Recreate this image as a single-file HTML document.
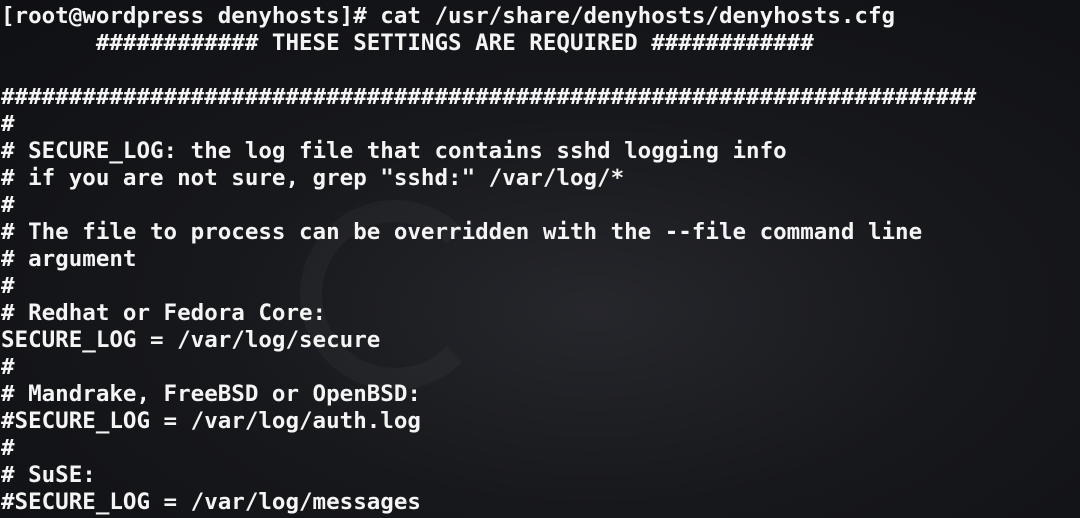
<!DOCTYPE html>
<html><head><style>
html,body{margin:0;padding:0;}
body{width:1080px;height:518px;overflow:hidden;background:radial-gradient(ellipse at 55% 60%,#26272c 0%,#17181c 45%,#0f1013 100%);position:relative;}
pre{margin:0;padding:3px 0 0 1px;font-family:"DejaVu Sans Mono","Liberation Mono",monospace;font-weight:bold;font-size:22.5px;line-height:27px;color:#f4f4f4;position:relative;}
.swirl{position:absolute;left:300px;top:200px;width:190px;height:190px;border-radius:50%;border:22px solid rgba(255,255,255,0.03);border-right-color:transparent;box-sizing:border-box;}
</style></head><body>
<div class="swirl"></div>
<pre>[root@wordpress denyhosts]# cat /usr/share/denyhosts/denyhosts.cfg
       ############ THESE SETTINGS ARE REQUIRED ############

########################################################################
#
# SECURE_LOG: the log file that contains sshd logging info
# if you are not sure, grep "sshd:" /var/log/*
#
# The file to process can be overridden with the --file command line
# argument
#
# Redhat or Fedora Core:
SECURE_LOG = /var/log/secure
#
# Mandrake, FreeBSD or OpenBSD:
#SECURE_LOG = /var/log/auth.log
#
# SuSE:
#SECURE_LOG = /var/log/messages</pre>
</body></html>
